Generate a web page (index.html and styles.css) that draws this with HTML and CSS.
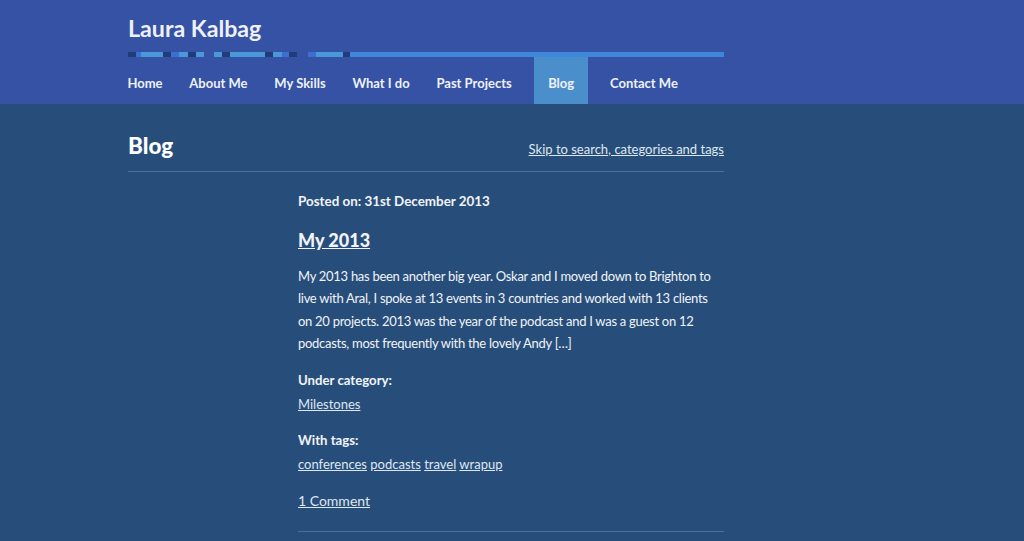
FILE: index.html
```html
<!DOCTYPE html>
<html lang="en">
<head>
<meta charset="utf-8">
<title>Blog – Laura Kalbag</title>
<link rel="stylesheet" href="styles.css">
</head>
<body>
<header class="masthead">
  <div class="wrap">
    <div class="site-title">Laura Kalbag</div>
    <div class="stripe">
      <span class="s d" style="width:8px"></span>
      <span class="s m" style="width:5px"></span>
      <span class="s l" style="width:22px"></span>
      <span class="s d" style="width:8px"></span>
      <span class="s m" style="width:8px"></span>
      <span class="s l" style="width:9px"></span>
      <span class="s d" style="width:8px"></span>
      <span class="s l" style="width:8px"></span>
      <span class="s g" style="width:10px"></span>
      <span class="s l" style="width:8px"></span>
      <span class="s d" style="width:8px"></span>
      <span class="s l" style="width:35px"></span>
      <span class="s d" style="width:8px"></span>
      <span class="s l" style="width:9px"></span>
      <span class="s m" style="width:7px"></span>
      <span class="s d" style="width:8px"></span>
      <span class="s g" style="width:11px"></span>
      <span class="s m" style="width:8px"></span>
      <span class="s l" style="width:27px"></span>
      <span class="s d" style="width:7px"></span>
      <span class="s solid"></span>
    </div>
    <nav class="main-nav">
      <ul>
        <li><a href="#">Home</a></li>
        <li><a href="#">About Me</a></li>
        <li><a href="#">My Skills</a></li>
        <li><a href="#">What I do</a></li>
        <li><a href="#">Past Projects</a></li>
        <li class="active"><a href="#">Blog</a></li>
        <li><a href="#">Contact Me</a></li>
      </ul>
    </nav>
  </div>
</header>
<main class="content">
  <div class="wrap">
    <div class="page-head">
      <h1>Blog</h1>
      <a class="skip" href="#">Skip to search, categories and tags</a>
    </div>
    <article class="post">
      <p class="posted">Posted on: 31st December 2013</p>
      <h2><a href="#">My 2013</a></h2>
      <p class="excerpt">My 2013 has been another big year. Oskar and I moved down to Brighton to live with Aral, I spoke at 13 events in 3 countries and worked with 13 clients on 20 projects. 2013 was the year of the podcast and I was a guest on 12 podcasts, most frequently with the lovely Andy […]</p>
      <p class="label">Under category:</p>
      <p class="links"><a href="#">Milestones</a></p>
      <p class="label">With tags:</p>
      <p class="links"><a href="#">conferences</a> <a href="#">podcasts</a> <a href="#">travel</a> <a href="#">wrapup</a></p>
      <p class="comments"><a href="#">1 Comment</a></p>
    </article>
  </div>
</main>
</body>
</html>
```
FILE: styles.css
```css
* { box-sizing: border-box; }
html, body { margin: 0; padding: 0; }
body {
  background: #274e7a;
  color: #f1f3f8;
  font-family: Lato, "Open Sans", sans-serif;
  height: 541px;
  overflow: hidden;
}
.wrap {
  width: 596px;
  margin-left: 128px;
}
.masthead {
  background: #3552a4;
}
.site-title {
  font-size: 23.2px;
  font-weight: 700;
  color: #eef1fa;
  padding-top: 15px;
  height: 52px;
  line-height: 26px;
}
.stripe {
  display: flex;
  height: 5px;
}
.s { display: block; height: 5px; }
.s.d { background: #213c78; }
.s.m { background: #3b6fd0; }
.s.l { background: #4a98d8; }
.s.g { background: #3552a4; }
.s.solid { flex: 1; background: #3f87da; }
.main-nav ul {
  list-style: none;
  margin: 0 0 0 -14px;
  padding: 0;
  display: flex;
}
.main-nav li a {
  display: block;
  padding: 0 13.4px;
  height: 47px;
  line-height: 52px;
  font-size: 13px;
  font-weight: 700;
  color: #eef1fa;
  text-decoration: none;
}
.main-nav li.active {
  margin: 0 9px;
}
.main-nav li.active a {
  background: #4a8fcb;
  padding: 0 13.5px 0 14px;
}
.page-head {
  display: flex;
  justify-content: space-between;
  align-items: baseline;
  padding-top: 28px;
  padding-bottom: 11px;
  border-bottom: 1px solid #4b709c;
}
.page-head h1 {
  margin: 0;
  font-size: 22.5px;
  font-weight: 900;
  line-height: 28px;
  color: #ffffff;
}
.skip {
  font-size: 13px;
  color: #dfe6f1;
}
.post {
  margin-left: 170px;
  padding-top: 19px;
  padding-bottom: 20px;
  border-bottom: 1px solid #4b709c;
}
.post p { margin: 0; }
.posted {
  font-size: 13.4px;
  font-weight: 700;
  line-height: 20px;
}
.post h2 {
  margin: 17px 0 13px;
  font-size: 18px;
  font-weight: 900;
  line-height: 24px;
}
.post h2 a { color: #f1f3f8; }
.excerpt {
  font-size: 13px;
  line-height: 22.3px;
  letter-spacing: -0.28px;
}
.label {
  font-size: 13.2px;
  font-weight: 700;
  line-height: 20px;
  margin-top: 16px !important;
}
.links {
  font-size: 13px;
  line-height: 20px;
  margin-top: 4px !important;
}
.post a { color: #dfe6f1; }
.comments {
  font-size: 14px;
  line-height: 20px;
  margin-top: 17px !important;
}
```
